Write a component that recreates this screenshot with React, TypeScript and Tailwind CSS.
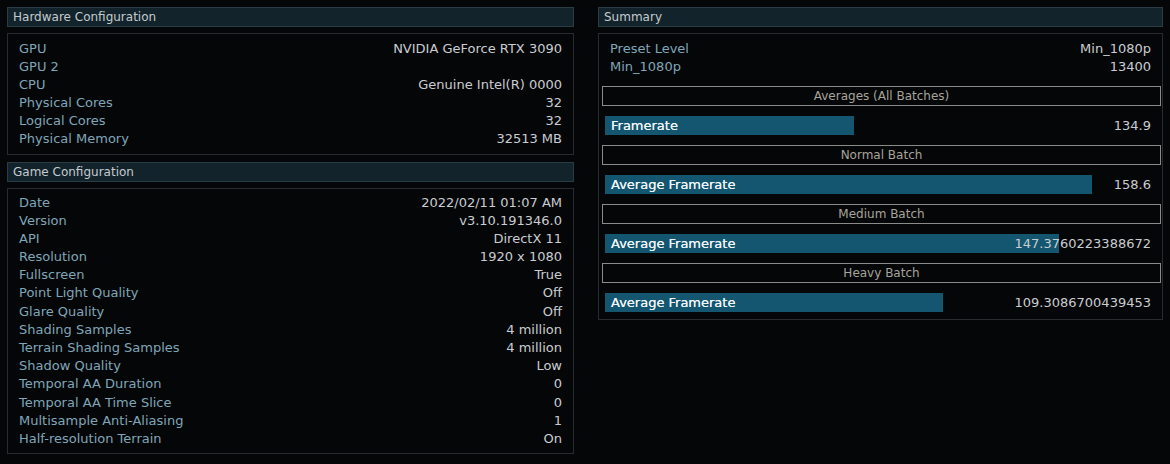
import React from "react";

const hardware: [string, string][] = [
  ["GPU", "NVIDIA GeForce RTX 3090"],
  ["GPU 2", ""],
  ["CPU", "Genuine Intel(R) 0000"],
  ["Physical Cores", "32"],
  ["Logical Cores", "32"],
  ["Physical Memory", "32513 MB"],
];

const game: [string, string][] = [
  ["Date", "2022/02/11 01:07 AM"],
  ["Version", "v3.10.191346.0"],
  ["API", "DirectX 11"],
  ["Resolution", "1920 x 1080"],
  ["Fullscreen", "True"],
  ["Point Light Quality", "Off"],
  ["Glare Quality", "Off"],
  ["Shading Samples", "4 million"],
  ["Terrain Shading Samples", "4 million"],
  ["Shadow Quality", "Low"],
  ["Temporal AA Duration", "0"],
  ["Temporal AA Time Slice", "0"],
  ["Multisample Anti-Aliasing", "1"],
  ["Half-resolution Terrain", "On"],
];

function Header({ title }: { title: string }) {
  return (
    <div className="h-[20px] bg-[#13232b] border border-[#2a3c45] px-[5px] flex items-center text-[12px] text-[#c3cbcf]">
      {title}
    </div>
  );
}

function Rows({ rows, gap }: { rows: [string, string][]; gap: string }) {
  return (
    <div className={"flex flex-col " + gap}>
      {rows.map(([k, v]) => (
        <div key={k} className="flex justify-between h-[18px] items-center leading-none">
          <span className="text-[#7fa6b8]">{k}</span>
          <span className="text-[#c9cdd1]">{v}</span>
        </div>
      ))}
    </div>
  );
}

function BatchTitle({ title }: { title: string }) {
  return (
    <div className="h-[20px] border border-[#8a8a88] flex items-center justify-center text-[12px] text-[#a6a49b]">
      {title}
    </div>
  );
}

function Bar({ label, value, width }: { label: string; value: string; width: string }) {
  return (
    <div className="relative h-[19px] ml-[3px] mr-[10px] flex items-center">
      <div className={"absolute left-0 top-0 h-full bg-[#14566f] " + width} />
      <span className="relative pl-[6px] text-[#f0f5f7] [text-shadow:0_0_0.4px_#f0f5f7]">{label}</span>
      <span className="relative ml-auto text-[#c9cdd1]">{value}</span>
    </div>
  );
}

export default function App() {
  return (
    <div
      className="w-[1170px] h-[464px] bg-[#050608] flex gap-[24px] px-[7px] pt-[7px] text-[13px]"
      style={{ fontFamily: '"DejaVu Sans", sans-serif' }}
    >
      <div className="w-[567px] flex flex-col">
        <Header title="Hardware Configuration" />
        <div className="mt-[6px] border border-[#262c30] pl-[11px] pr-[11px] pt-[5px] pb-[7px]">
          <Rows rows={hardware} gap="gap-0" />
        </div>
        <div className="mt-[7px]">
          <Header title="Game Configuration" />
        </div>
        <div className="mt-[6px] border border-[#262c30] pl-[11px] pr-[11px] pt-[4px] pb-[6px]">
          <Rows rows={game} gap="gap-[0.2px]" />
        </div>
      </div>

      <div className="w-[565px] flex flex-col">
        <Header title="Summary" />
        <div className="mt-[6px] border border-[#262c30] pl-[3px] pr-[1px] pt-[5px] pb-[7px]">
          <div className="pl-[8px] pr-[10px]">
            <Rows rows={[["Preset Level", "Min_1080p"], ["Min_1080p", "13400"]]} gap="gap-0" />
          </div>
          <div className="mt-[11px] flex flex-col gap-[10px]">
            <BatchTitle title="Averages (All Batches)" />
            <Bar label="Framerate" value="134.9" width="w-[249px]" />
            <BatchTitle title="Normal Batch" />
            <Bar label="Average Framerate" value="158.6" width="w-[487px]" />
            <BatchTitle title="Medium Batch" />
            <Bar label="Average Framerate" value="147.3760223388672" width="w-[454px]" />
            <BatchTitle title="Heavy Batch" />
            <Bar label="Average Framerate" value="109.3086700439453" width="w-[338px]" />
          </div>
        </div>
      </div>
    </div>
  );
}
